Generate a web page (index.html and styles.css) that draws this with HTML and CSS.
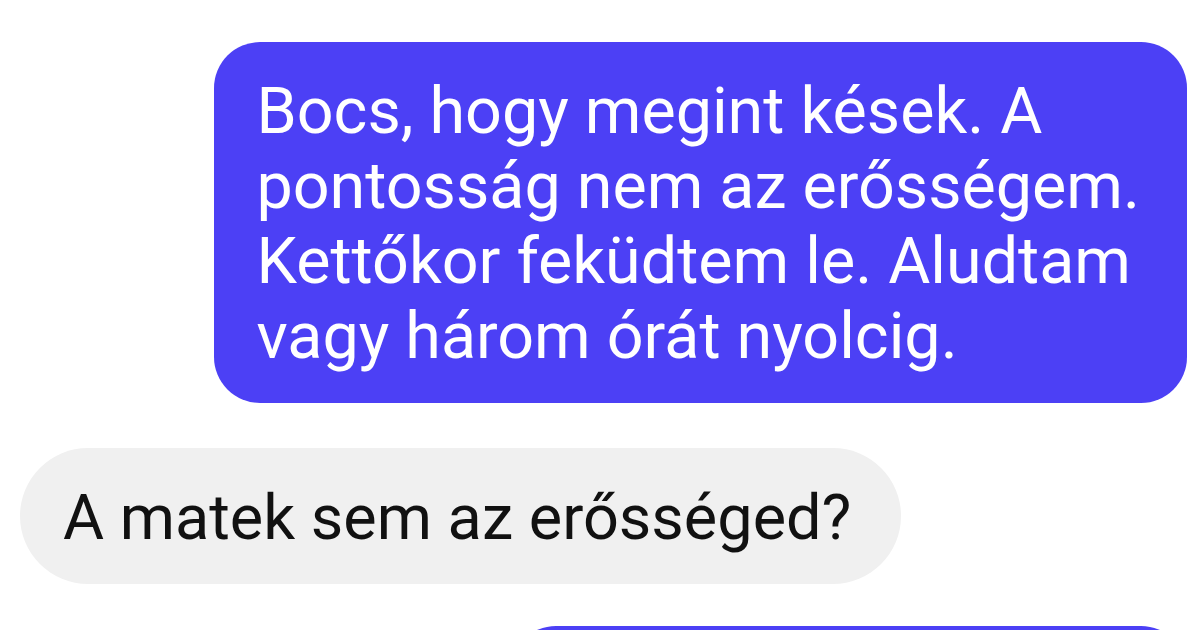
FILE: index.html
```html
<!DOCTYPE html>
<html lang="hu">
<head>
    <meta charset="UTF-8">
    <meta name="viewport" content="width=device-width, initial-scale=1.0">
    <title>Beszélgetés</title>
    <link rel="stylesheet" href="styles.css">
</head>
<body>
    <div class="chat">
        <div class="row sent">
            <div class="bubble bubble-sent">
                Bocs, hogy megint kések. A<br>
                pontosság nem az erősségem.<br>
                Kettőkor feküdtem le. Aludtam<br>
                vagy három órát nyolcig.
            </div>
        </div>
        <div class="row received">
            <div class="bubble bubble-received">A matek sem az erősséged?</div>
        </div>
        <div class="row sent">
            <div class="bubble bubble-sent bubble-next"></div>
        </div>
    </div>
</body>
</html>
```

FILE: styles.css
```css
html {
    overflow: hidden;
}

body {
    margin: 0;
    padding: 0;
    background: #ffffff;
    font-family: 'Roboto', 'Noto Sans', sans-serif;
}

.chat {
    display: flex;
    flex-direction: column;
    gap: 45px;
    padding: 42px 13px 0 20px;
}

.row {
    display: flex;
}

.row.sent {
    justify-content: flex-end;
}

.row.received {
    justify-content: flex-start;
}

.bubble {
    font-size: 64.6px;
    line-height: 75px;
    padding: 32px 47px 29px 43px;
    white-space: nowrap;
}

.bubble-sent {
    background: #4c40f5;
    color: #ffffff;
    border-radius: 46px;
}

.bubble-received {
    background: #f0f0f0;
    color: #111111;
    font-size: 63px;
    border-radius: 68px;
    padding-right: 50px;
}

.bubble-next {
    width: 587px;
    height: 75px;
    margin-top: -3px;
}
```
